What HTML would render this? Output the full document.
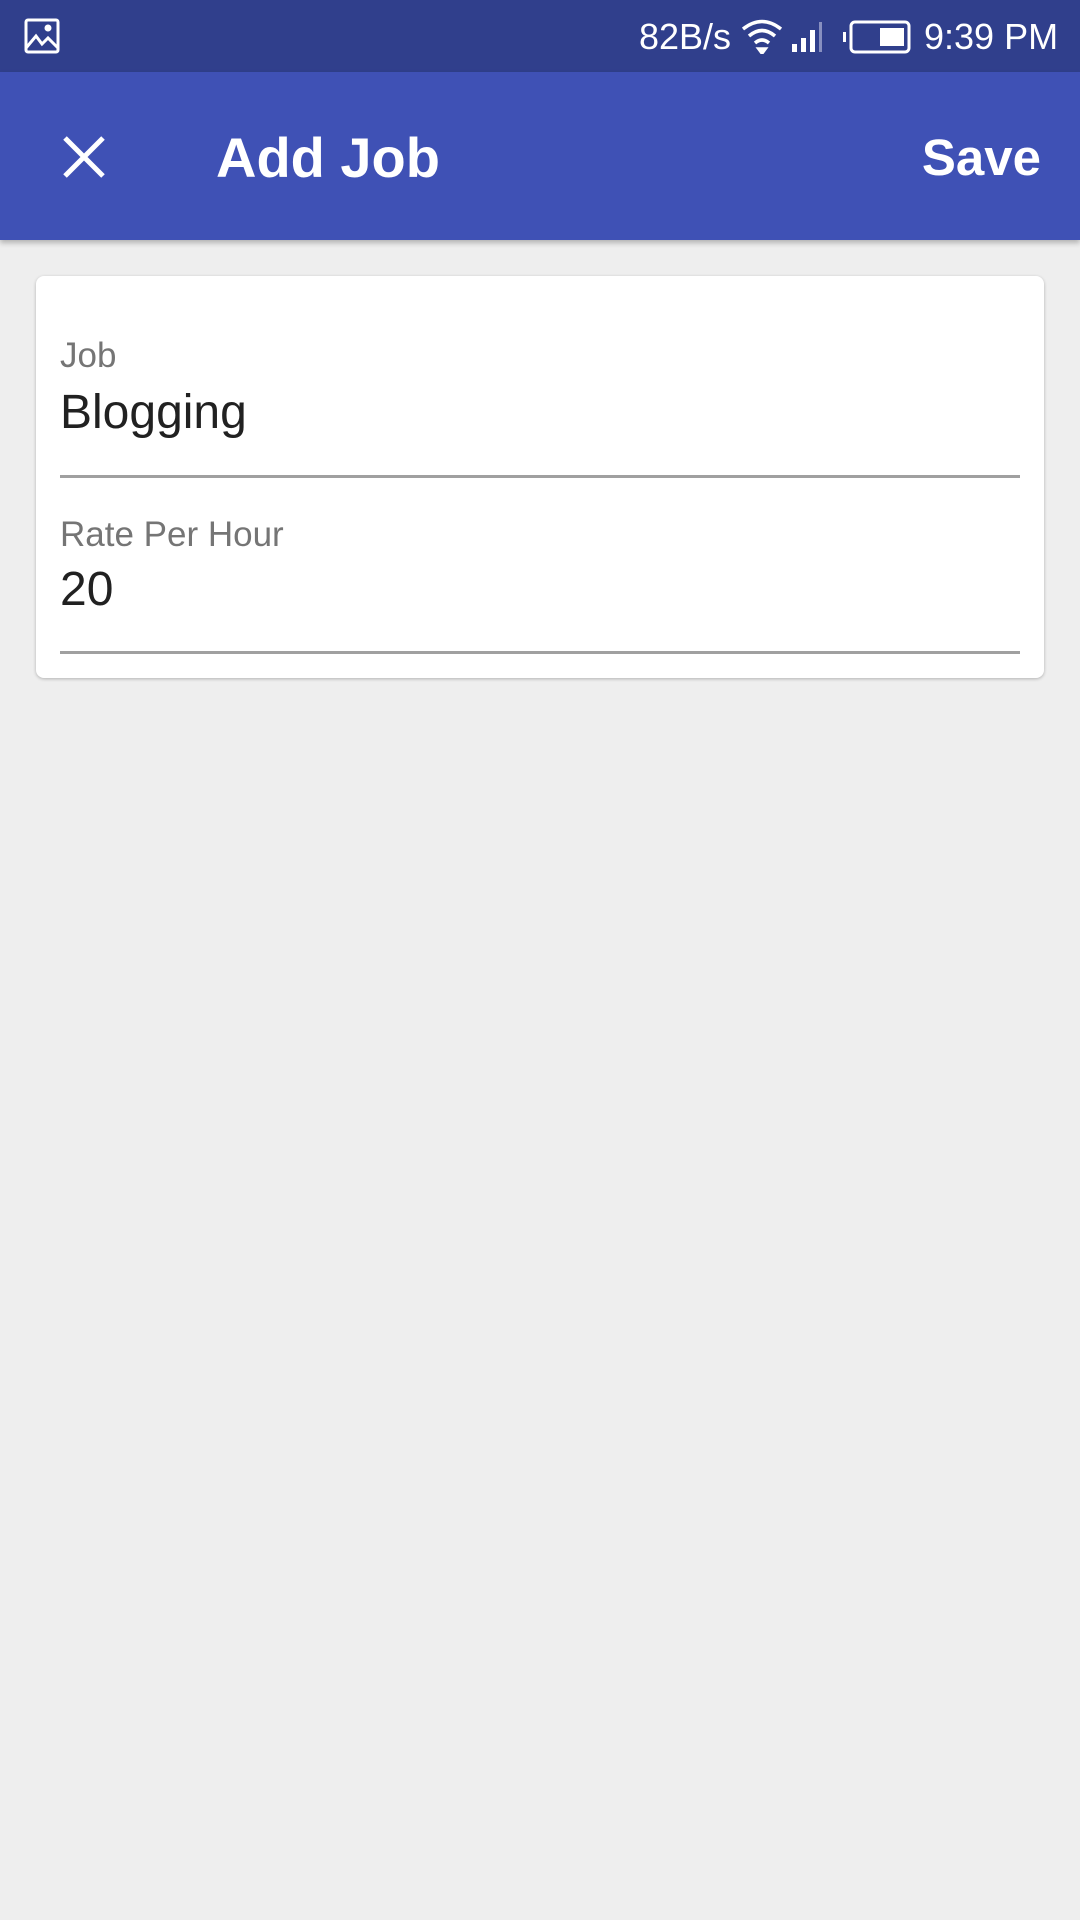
<!DOCTYPE html>
<html><head><style>
html,body{margin:0;padding:0;}
body{width:1080px;height:1920px;background:#eeeeee;position:relative;overflow:hidden;font-family:"Liberation Sans",sans-serif;}
.status{position:absolute;left:0;top:0;width:1080px;height:72px;background:#303f8c;}
.bar{position:absolute;left:0;top:72px;width:1080px;height:168px;background:#3f51b5;box-shadow:0 3px 5px rgba(0,0,0,.25);}
.t{position:absolute;color:#fff;white-space:nowrap;}
.card{position:absolute;left:36px;top:276px;width:1008px;height:402px;background:#fff;border-radius:8px;box-shadow:0 1px 3px rgba(0,0,0,.25);}
.lbl{position:absolute;left:24px;font-size:35px;color:#757575;white-space:nowrap;}
.val{position:absolute;left:24px;font-size:48px;color:#212121;white-space:nowrap;}
.line{position:absolute;left:24px;width:960px;height:3px;background:#a0a0a0;}
</style></head><body>
<div class="status">
<svg style="position:absolute;left:24px;top:18px" width="36" height="36" viewBox="0 0 36 36" fill="none" stroke="#fff" stroke-width="3"><rect x="2" y="2" width="32" height="32" rx="2"/><path d="M2 30 L12 18 L18 26 L24 20 L34 30"/><circle cx="24" cy="10" r="2" fill="#fff"/></svg>
<div class="t" style="left:639px;top:16px;font-size:36px;">82B/s</div>
<svg style="position:absolute;left:740px;top:18px" width="44" height="36" viewBox="0 0 44 36" fill="none" stroke="#fff" stroke-width="3.5"><path d="M3 11 Q22 -4 41 11"/><path d="M9 18 Q22 7 35 18"/><path d="M15 25 Q22 19 29 25"/><path d="M19 31 L22 35 L25 31 Z" fill="#fff"/></svg>
<svg style="position:absolute;left:790px;top:22px" width="40" height="30" viewBox="0 0 40 30" fill="#fff"><rect x="2" y="22" width="5" height="8"/><rect x="11" y="16" width="5" height="14"/><rect x="20" y="8" width="5" height="22"/><rect x="29" y="0" width="3" height="30" fill="#8890c0"/></svg>
<svg style="position:absolute;left:842px;top:20px" width="70" height="34" viewBox="0 0 70 34" fill="none" stroke="#fff" stroke-width="3"><rect x="1" y="12" width="3" height="10" fill="#fff" stroke="none"/><rect x="9" y="2" width="58" height="30" rx="4"/><rect x="38" y="8" width="24" height="18" fill="#fff" stroke="none"/></svg>
<div class="t" style="left:924px;top:16px;font-size:36px;">9:39 PM</div>
</div>
<div class="bar">
<svg style="position:absolute;left:63px;top:64px" width="42" height="42" viewBox="0 0 42 42" stroke="#fff" stroke-width="5"><path d="M2 2 L40 40 M40 2 L2 40"/></svg>
<div class="t" style="left:216px;top:53px;font-size:56px;font-weight:bold;">Add Job</div>
<div class="t" style="right:39px;top:56px;font-size:51px;font-weight:bold;">Save</div>
</div>
<div class="card">
<div class="lbl" style="top:60px;">Job</div>
<div class="val" style="top:109px;">Blogging</div>
<div class="line" style="top:199px;"></div>
<div class="lbl" style="top:239px;">Rate Per Hour</div>
<div class="val" style="top:286px;">20</div>
<div class="line" style="top:375px;"></div>
</div>
</body></html>
